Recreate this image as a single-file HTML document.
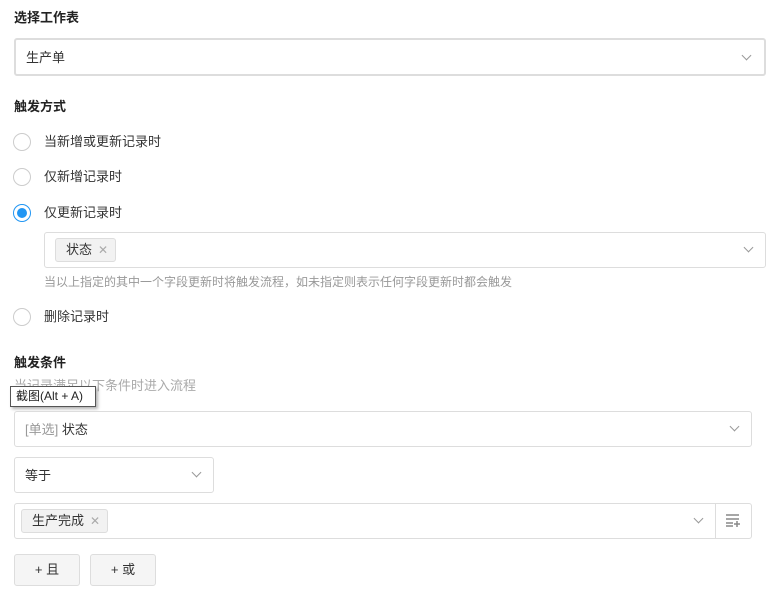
<!DOCTYPE html>
<html><head><meta charset="utf-8"><style>
body{margin:0;width:780px;height:598px;background:#fff;font-family:"Liberation Sans","Noto Sans CJK SC",sans-serif;font-size:13px;color:#333;position:relative;overflow:hidden}
.a{position:absolute}
.t{font-weight:bold;color:#222}
.box{position:absolute;border:1px solid #ddd;border-radius:3px;box-sizing:border-box;background:#fff}
.ch{position:absolute;width:6px;height:6px;border-right:1px solid #999;border-bottom:1px solid #999;transform:rotate(45deg)}
.r{position:absolute;width:18px;height:18px;border:1px solid #ccc;border-radius:50%;box-sizing:border-box}
.tag{position:absolute;background:#f2f2f2;border:1px solid #ddd;border-radius:3px;box-sizing:border-box;font-size:13px;line-height:22px;padding-left:10px}
.tag span{color:#aaa;font-size:12px;margin-left:6px}
.btn{position:absolute;background:#f5f5f5;border:1px solid #ddd;border-radius:3px;box-sizing:border-box;text-align:center;line-height:29px;width:66px;height:32px;top:554px}
</style></head><body>
<div class="a t" style="left:14px;top:7px">选择工作表</div>
<div class="box" style="left:14px;top:38px;width:752px;height:38px;border:2px solid #ddd"></div>
<div class="a" style="left:26px;top:47px">生产单</div>
<div class="ch" style="left:743px;top:52px"></div>
<div class="a t" style="left:14px;top:96px">触发方式</div>
<div class="r" style="left:13px;top:133px"></div><div class="a" style="left:44px;top:131px">当新增或更新记录时</div>
<div class="r" style="left:13px;top:168px"></div><div class="a" style="left:44px;top:166px">仅新增记录时</div>
<div class="r" style="left:13px;top:204px;border-color:#2196f3"><div style="position:absolute;left:3px;top:3px;width:10px;height:10px;border-radius:50%;background:#2196f3"></div></div><div class="a" style="left:44px;top:202px">仅更新记录时</div>
<div class="box" style="left:44px;top:232px;width:722px;height:36px"></div>
<div class="tag" style="left:55px;top:238px;width:61px;height:24px">状态<span>✕</span></div>
<div class="ch" style="left:745px;top:244px"></div>
<div class="a" style="left:44px;top:273px;font-size:12px;color:#999">当以上指定的其中一个字段更新时将触发流程，如未指定则表示任何字段更新时都会触发</div>
<div class="r" style="left:13px;top:308px"></div><div class="a" style="left:44px;top:306px">删除记录时</div>
<div class="a t" style="left:14px;top:352px">触发条件</div>
<div class="a" style="left:14px;top:375px;color:#aaa">当记录满足以下条件时进入流程</div>
<div class="a" style="left:10px;top:386px;width:86px;height:21px;border:1px solid #555;background:#fff;box-sizing:border-box;box-shadow:2px 2px 3px rgba(0,0,0,.3);font-size:12px;line-height:19px;padding-left:5px;color:#222">截图(Alt + A)</div>
<div class="box" style="left:14px;top:411px;width:738px;height:36px"></div>
<div class="a" style="left:25px;top:419px"><span style="color:#999">[单选]</span> 状态</div>
<div class="ch" style="left:731px;top:423px"></div>
<div class="box" style="left:14px;top:457px;width:200px;height:36px"></div>
<div class="a" style="left:25px;top:465px">等于</div>
<div class="ch" style="left:193px;top:469px"></div>
<div class="box" style="left:14px;top:503px;width:738px;height:36px"></div>
<div class="a" style="left:715px;top:504px;width:1px;height:34px;background:#ddd"></div>
<div class="tag" style="left:21px;top:509px;width:87px;height:24px">生产完成<span>✕</span></div>
<div class="ch" style="left:695px;top:515px"></div>
<svg class="a" style="left:725px;top:513px" width="16" height="14"><g stroke="#888" stroke-width="1.5"><line x1="1" y1="2" x2="14" y2="2"/><line x1="1" y1="6" x2="14" y2="6"/><line x1="1" y1="10" x2="8" y2="10"/><line x1="1" y1="13" x2="8" y2="13"/><line x1="12" y1="8" x2="12" y2="14"/><line x1="9" y1="11" x2="15" y2="11"/></g></svg>
<div class="btn" style="left:14px">+ 且</div>
<div class="btn" style="left:90px">+ 或</div>
</body></html>
